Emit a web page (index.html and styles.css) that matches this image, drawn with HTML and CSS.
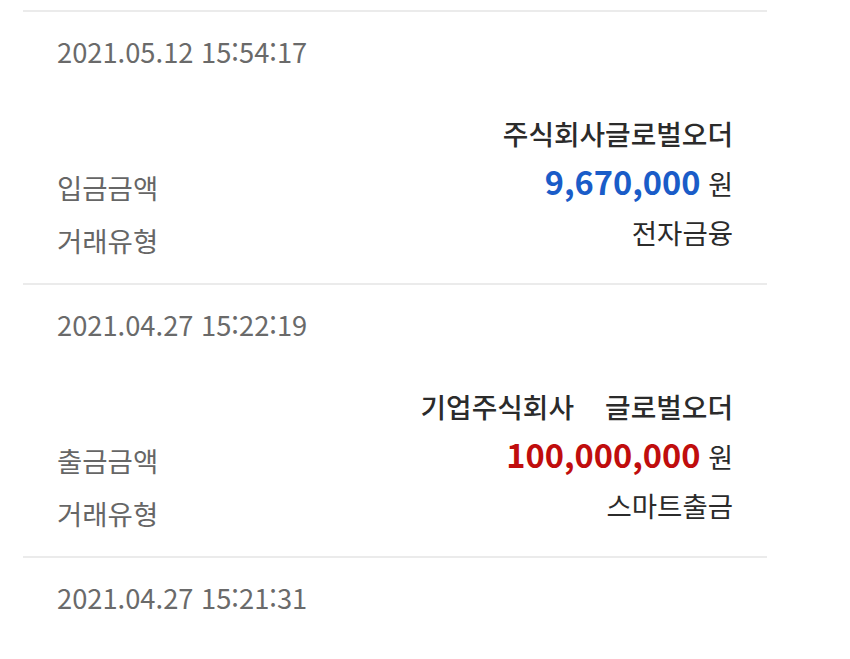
FILE: index.html
```html
<!DOCTYPE html>
<html lang="ko">
<head>
    <meta charset="UTF-8">
    <meta name="viewport" content="width=device-width, initial-scale=1.0">
    <title>거래내역</title>
    <link rel="stylesheet" href="styles.css">
</head>
<body>
    <div class="history">
        <div class="item">
            <div class="item-date">2021.05.12 15:54:17</div>
            <div class="item-body">
                <div class="labels">
                    <div>입금금액</div>
                    <div>거래유형</div>
                </div>
                <div class="values">
                    <div class="name">주식회사글로벌오더</div>
                    <div class="amount"><span class="num deposit">9,670,000</span> <span class="won">원</span></div>
                    <div>전자금융</div>
                </div>
            </div>
        </div>
        <div class="item">
            <div class="item-date">2021.04.27 15:22:19</div>
            <div class="item-body">
                <div class="labels">
                    <div>출금금액</div>
                    <div>거래유형</div>
                </div>
                <div class="values">
                    <div class="name">기업주식회사&nbsp;&nbsp;&nbsp;&nbsp;글로벌오더</div>
                    <div class="amount"><span class="num withdraw">100,000,000</span> <span class="won">원</span></div>
                    <div>스마트출금</div>
                </div>
            </div>
        </div>
        <div class="item">
            <div class="item-date">2021.04.27 15:21:31</div>
        </div>
    </div>
</body>
</html>
```

FILE: styles.css
```css
body {
    margin: 0;
    background-color: #fff;
    font-family: "Noto Sans CJK KR", "Noto Sans", sans-serif;
}

.history {
    width: 744px;
    margin-left: 23px;
    padding-top: 10px;
}

.item {
    border-top: 2px solid #ebebeb;
    padding: 0 34px 16px;
}

.item-date {
    margin-top: 19px;
    font-size: 27.3px;
    line-height: 40px;
    color: #6a6a6a;
}

.item-body {
    display: flex;
    justify-content: space-between;
    margin-top: 38px;
}

.labels {
    padding-top: 52px;
    font-size: 27.5px;
    line-height: 53px;
    color: #666;
}

.values {
    text-align: right;
    font-size: 27.5px;
    line-height: 48px;
    color: #2b2b2b;
}

.name {
    font-weight: 500;
    font-size: 27.8px;
}

.num {
    font-size: 32.6px;
    font-weight: bold;
}

.deposit {
    color: #1a5cc8;
}

.withdraw {
    color: #c00d0d;
}

.won {
    font-size: 27px;
}
```
